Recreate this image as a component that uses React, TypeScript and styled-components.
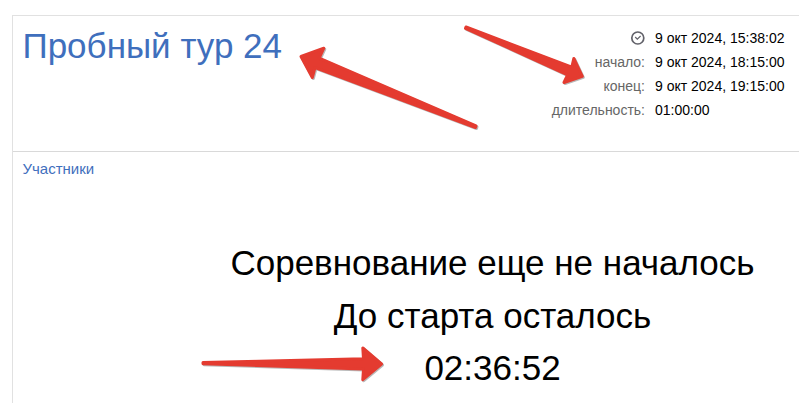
import React from 'react';
import styled, { createGlobalStyle } from 'styled-components';

const GlobalStyle = createGlobalStyle`
  html, body { margin: 0; background: #fff; }
  body { overflow: hidden; font-family: "Liberation Sans", Arial, sans-serif; color: #000; }
`;

const Page = styled.div`
  position: relative;
  box-sizing: border-box;
  width: 799px;
  height: 403px;
  padding: 15px 0 0 12px;
  overflow: hidden;
`;

const Contest = styled.main`
  box-sizing: border-box;
  width: 961px;
  height: 500px;
  border: 1px solid #e1e1e1;
`;

const Header = styled.header`
  box-sizing: border-box;
  display: flex;
  height: 136px;
  padding: 10px 10px 0 9.5px;
  border-bottom: 1px solid #d9d9d9;
`;

const Title = styled.h1`
  width: 510.5px;
  margin: 0;
  font-size: 35px;
  font-weight: 400;
  line-height: 40px;
  white-space: nowrap;
  color: #3f6fbd;
`;

const Schedule = styled.dl`
  display: grid;
  grid-template-columns: 112px auto;
  grid-auto-rows: 24px;
  column-gap: 10px;
  align-content: start;
  margin: 0;
  font-size: 14px;
  line-height: 24px;
  white-space: nowrap;
`;

const Label = styled.dt`
  display: flex;
  align-items: center;
  justify-content: flex-end;
  color: #666;
`;

const Value = styled.dd`
  margin: 0;
`;

const Nav = styled.nav`
  padding: 8px 9.5px 0;
  font-size: 15px;
  line-height: 18px;
`;

const NavLink = styled.a`
  color: #3f6fbd;
  text-decoration: none;
`;

const Countdown = styled.section`
  padding-top: 59px;
  font-size: 35px;
  line-height: 52.5px;
  text-align: center;
`;

const Line = styled.div`
  white-space: nowrap;
`;

const ArrowLayer = styled.svg`
  position: absolute;
  inset: 0;
  pointer-events: none;
  filter: drop-shadow(1px 1.5px 0.7px rgba(0, 0, 0, 0.28));
`;

const schedule = [
  { label: 'начало:', value: '9 окт 2024, 18:15:00' },
  { label: 'конец:', value: '9 окт 2024, 19:15:00' },
  { label: 'длительность:', value: '01:00:00' },
];

const arrows = [
  'M301 56.5 L323.8 48.2 L319.2 58.2 L476 126 L475.5 127.5 L315 67.6 L312.3 77.5Z',
  'M466 27 L571.8 67.2 L573.8 58.5 L582.3 76.3 L564 82.5 L567.6 74.8 L465.5 28.3Z',
  'M203 362.5 L363.5 358.8 L362.8 348 L381.5 364 L362.8 379.7 L363.5 369 L203 363.7Z',
];

const ClockIcon = () => (
  <svg width="16" height="16" viewBox="0 0 16 16" fill="none" stroke="#62626a">
    <circle cx="8.8" cy="8" r="6" strokeWidth="1.7" />
    <path d="M6.2 7 L8.3 9.1 L11.6 6" strokeWidth="1.2" />
  </svg>
);

export default function App() {
  return (
    <Page>
      <GlobalStyle />
      <Contest>
        <Header>
          <Title>Пробный тур 24</Title>
          <Schedule>
            <Label><ClockIcon /></Label>
            <Value>9 окт 2024, 15:38:02</Value>
            {schedule.map((row) => (
              <React.Fragment key={row.label}>
                <Label>{row.label}</Label>
                <Value>{row.value}</Value>
              </React.Fragment>
            ))}
          </Schedule>
        </Header>
        <Nav><NavLink>Участники</NavLink></Nav>
        <Countdown>
          <Line>Соревнование еще не началось</Line>
          <Line>До старта осталось</Line>
          <Line>02:36:52</Line>
        </Countdown>
      </Contest>
      <ArrowLayer width="799" height="403" viewBox="0 0 799 403">
        {arrows.map((d) => (
          <path key={d} d={d} fill="#e43b30" stroke="#e43b30" strokeWidth="3" strokeLinejoin="round" />
        ))}
      </ArrowLayer>
    </Page>
  );
}
